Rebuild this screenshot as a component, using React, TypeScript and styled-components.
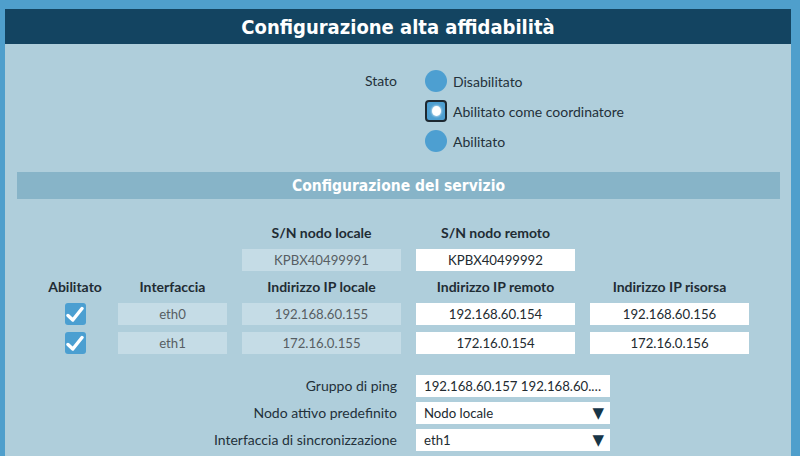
import React from "react";
import styled, { createGlobalStyle } from "styled-components";

const GlobalStyle = createGlobalStyle`
  html, body {
    margin: 0;
    padding: 0;
    background: #4f9fcc;
    font-family: "Lato", "Noto Sans", sans-serif;
    overflow: hidden;
  }
`;

const Page = styled.div`
  width: 800px;
  height: 456px;
  padding: 9px 9px 0 5px;
  box-sizing: border-box;
`;

const Panel = styled.div`
  width: 786px;
  height: 447px;
  background: #afcedb;
  display: flex;
  flex-direction: column;
`;

const Header = styled.div`
  height: 35px;
  background: #134461;
  display: flex;
  align-items: center;
  justify-content: center;
  color: #ffffff;
  font-family: "DejaVu Sans Condensed", "Liberation Sans Narrow", "Lato", sans-serif;
  font-weight: bold;
  font-size: 20px;
`;

const FormGrid = styled.div<{ $top: number; $rowGap: number; $align: "start" | "center" }>`
  display: grid;
  grid-template-columns: 392px 194px;
  column-gap: 19px;
  row-gap: ${(p) => p.$rowGap}px;
  margin-top: ${(p) => p.$top}px;
  align-items: ${(p) => p.$align};
`;

const Label = styled.div`
  text-align: right;
  font-size: 14px;
  color: #23313a;
  line-height: 22px;
`;

const RadioGroup = styled.div`
  display: flex;
  flex-direction: column;
  gap: 8px;
  padding-left: 9px;
`;

const RadioRow = styled.div`
  display: flex;
  align-items: center;
  gap: 6px;
  height: 22px;
  font-size: 14px;
  color: #23313a;
  white-space: nowrap;
`;

const RadioDot = styled.span<{ $checked?: boolean }>`
  width: 22px;
  height: 22px;
  box-sizing: border-box;
  flex: none;
  display: flex;
  align-items: center;
  justify-content: center;
  background: #4d9fd1;
  border-radius: ${(p) => (p.$checked ? "4px" : "50%")};
  border: ${(p) => (p.$checked ? "2px solid #1d2830" : "none")};
  &::after {
    content: "";
    display: ${(p) => (p.$checked ? "block" : "none")};
    width: 9px;
    height: 10px;
    border-radius: 50%;
    background: #ffffff;
    box-shadow: 0 0 2px 1px rgba(255, 255, 255, 0.5);
  }
`;

const SectionBar = styled.div`
  margin: 20px 11px 0 12px;
  height: 27px;
  background: #87b4c8;
  display: flex;
  align-items: center;
  justify-content: center;
  color: #ffffff;
  font-family: "DejaVu Sans Condensed", "Liberation Sans Narrow", "Lato", sans-serif;
  font-weight: bold;
  font-size: 15.5px;
`;

const Table = styled.div`
  display: grid;
  grid-template-columns: 56px 109px 159px 159px 159px;
  column-gap: 15px;
  row-gap: 7px;
  justify-content: center;
  margin-top: 25px;
  align-items: center;
`;

const HeadCell = styled.div`
  height: 18px;
  line-height: 18px;
  text-align: center;
  font-weight: bold;
  font-size: 14px;
  color: #1f2c34;
  white-space: nowrap;
`;

const Field = styled.div<{ $readonly?: boolean; $align?: "left" | "center" }>`
  height: 22px;
  line-height: 22px;
  box-sizing: border-box;
  padding: 0 8px;
  background: ${(p) => (p.$readonly ? "#c5dce6" : "#ffffff")};
  color: ${(p) => (p.$readonly ? "#575e63" : "#222a30")};
  text-align: ${(p) => p.$align ?? "center"};
  font-size: 13.2px;
  white-space: nowrap;
  overflow: hidden;
`;

const SelectField = styled(Field)`
  display: flex;
  align-items: center;
  justify-content: space-between;
  padding-right: 6px;
`;

const Arrow = styled.span`
  color: #173548;
  font-family: "DejaVu Sans", sans-serif;
  font-size: 15px;
  line-height: 1;
`;

const CheckCell = styled.div`
  display: flex;
  justify-content: center;
`;

const CheckBox = styled.span`
  width: 21px;
  height: 22px;
  border-radius: 3px;
  background: #4b9fd1;
  display: flex;
  align-items: center;
  justify-content: center;
`;

const Check = () => (
  <svg width="18" height="17" viewBox="0 0 18 17">
    <path
      d="M2 9.5 L6.8 14 L16 2.5"
      fill="none"
      stroke="#ffffff"
      strokeWidth="3.4"
      strokeLinecap="round"
      strokeLinejoin="round"
    />
  </svg>
);

const Empty = styled.div``;

const rows = [
  { iface: "eth0", local: "192.168.60.155", remote: "192.168.60.154", res: "192.168.60.156" },
  { iface: "eth1", local: "172.16.0.155", remote: "172.16.0.154", res: "172.16.0.156" },
];

export default function App() {
  return (
    <>
      <GlobalStyle />
      <Page>
        <Panel>
          <Header>Configurazione alta affidabilità</Header>
          <FormGrid $top={26} $rowGap={0} $align="start">
            <Label>Stato</Label>
            <RadioGroup>
              <RadioRow>
                <RadioDot />
                Disabilitato
              </RadioRow>
              <RadioRow>
                <RadioDot $checked />
                Abilitato come coordinatore
              </RadioRow>
              <RadioRow>
                <RadioDot />
                Abilitato
              </RadioRow>
            </RadioGroup>
          </FormGrid>
          <SectionBar>Configurazione del servizio</SectionBar>
          <Table>
            <Empty />
            <Empty />
            <HeadCell>S/N nodo locale</HeadCell>
            <HeadCell>S/N nodo remoto</HeadCell>
            <Empty />
            <Empty />
            <Empty />
            <Field $readonly>KPBX40499991</Field>
            <Field>KPBX40499992</Field>
            <Empty />
            <HeadCell>Abilitato</HeadCell>
            <HeadCell>Interfaccia</HeadCell>
            <HeadCell>Indirizzo IP locale</HeadCell>
            <HeadCell>Indirizzo IP remoto</HeadCell>
            <HeadCell>Indirizzo IP risorsa</HeadCell>
            {rows.map((r) => (
              <React.Fragment key={r.iface}>
                <CheckCell>
                  <CheckBox>
                    <Check />
                  </CheckBox>
                </CheckCell>
                <Field $readonly>{r.iface}</Field>
                <Field $readonly>{r.local}</Field>
                <Field>{r.remote}</Field>
                <Field>{r.res}</Field>
              </React.Fragment>
            ))}
          </Table>
          <FormGrid $top={21} $rowGap={5} $align="center">
            <Label>Gruppo di ping</Label>
            <Field $align="left">192.168.60.157 192.168.60.…</Field>
            <Label>Nodo attivo predefinito</Label>
            <SelectField $align="left">
              <span>Nodo locale</span>
              <Arrow>▼</Arrow>
            </SelectField>
            <Label>Interfaccia di sincronizzazione</Label>
            <SelectField $align="left">
              <span>eth1</span>
              <Arrow>▼</Arrow>
            </SelectField>
          </FormGrid>
        </Panel>
      </Page>
    </>
  );
}
